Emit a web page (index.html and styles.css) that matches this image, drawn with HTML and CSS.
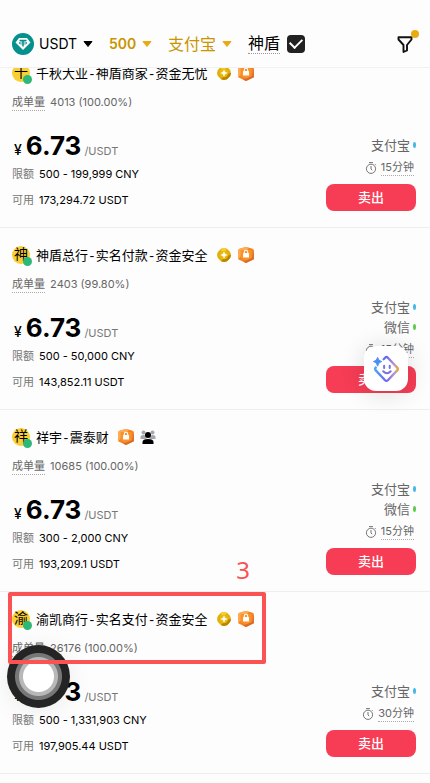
FILE: index.html
```html
<!DOCTYPE html>
<html lang="zh-CN">
<head>
<meta charset="utf-8">
<meta name="viewport" content="width=device-width, initial-scale=1">
<title>USDT 卖出</title>
<link rel="stylesheet" href="styles.css">
</head>
<body>
<svg class="defs" aria-hidden="true">
  <symbol id="coin" viewBox="0 0 14 14">
    <path d="M4 .8 7 0l3 .8L13.200 4 14 7l-.8 3L10 13.200 7 14l-3-.8L.8 10 0 7l.8-3z" fill="#e2b008"/>
    <path d="M4 .8 7 0l3 .8L5 7z" fill="#f6d02c"/>
    <path d="M14 7l-.8 3L10 13.200 7 14l-3-.8L9 8z" fill="#b98500"/>
    <circle cx="7" cy="7" r="4.200" fill="#e9b911"/>
    <path d="M7 3.800l.9 2.300 2.300.9-2.300.9L7 10.200l-.9-2.300L3.800 7l2.300-.9z" fill="#fff" stroke="#fff" stroke-width=".4"/>
  </symbol>
  <symbol id="shield" viewBox="0 0 16 16">
    <path d="M2 1.500 8 0l6 1.500 1.800 1.200v9.600L8 16 .2 12.300V2.700z" fill="#f58220"/>
    <path d="M.2 2.700 2 1.500 8 0l3 .8L3 9l-2.800 3.300z" fill="#ffad55"/>
    <path d="M15.800 2.700v9.600L8 16l-3-1.500 9-3.500z" fill="#d96a2c"/>
    <path d="M2.500 3h11v8L8 13.500 2.500 11z" fill="#fa922b"/>
    <rect x="5" y="6" width="6" height="4.500" rx=".5" fill="#fff"/>
    <path d="M6.300 6.200V5a1.700 1.700 0 0 1 3.400 0v1.200" fill="none" stroke="#fff" stroke-width="1.100"/>
  </symbol>
  <symbol id="timer" viewBox="0 0 12 12">
    <circle cx="6" cy="6.800" r="4.600" fill="none" stroke="#777" stroke-width="1"/>
    <path d="M4 .6h4M6 4v3l1.200 1.200M10 2.200l.9.900" fill="none" stroke="#777" stroke-width="1"/>
  </symbol>
  <symbol id="caret" viewBox="0 0 10 6">
    <path d="M1 .5h8L5 5.500z" fill="currentColor" stroke="currentColor" stroke-linejoin="round"/>
  </symbol>
</svg>

<header class="topbar">
  <label class="pick latin">
    <svg class="tether" viewBox="0 0 22 22" aria-hidden="true">
      <circle cx="11" cy="11" r="11" fill="#05908b"/>
      <path d="M7 5h8l3.500 4.500L11 17 3.500 9.500z" fill="#fff"/>
      <path d="M7.500 7.500h7M11 7.500v6" stroke="#05908b" stroke-width="1.500"/>
      <ellipse cx="11" cy="10" rx="4" ry="1.100" fill="none" stroke="#05908b" stroke-width=".8"/>
    </svg>
    <select aria-label="币种"><option>USDT</option></select>
    <svg class="caret" aria-hidden="true"><use href="#caret"/></svg>
  </label>
  <label class="pick latin gold bold">
    <select aria-label="金额"><option>500</option></select>
    <svg class="caret" aria-hidden="true"><use href="#caret"/></svg>
  </label>
  <label class="pick gold">
    <select aria-label="支付方式"><option>支付宝</option></select>
    <svg class="caret" aria-hidden="true"><use href="#caret"/></svg>
  </label>
  <label class="guard"><span>神盾</span><input type="checkbox" checked></label>
  <button class="filter" type="button" aria-label="筛选">
    <svg viewBox="0 0 16 17" aria-hidden="true"><path d="M1.500 1.200h13v2.300L10 9v5.500L6.500 16V9L1.500 3.500z" fill="none" stroke="#111" stroke-width="1.900" stroke-linejoin="round"/></svg>
  </button>
</header>

<main class="list">
  <article class="offer">
    <h2 class="merchant"><span class="avatar">千</span><a href="#">千秋大业-神盾商家-资金无忧</a><svg class="coin"><use href="#coin"/></svg><svg class="shield"><use href="#shield"/></svg></h2>
    <p class="trades"><span>成单量</span> 4013 (100.00%)</p>
    <div class="body">
      <div class="terms">
        <p class="price"><small>¥</small><b>6.73</b><i>/USDT</i></p>
        <p class="row"><span>限额</span>500 - 199,999 CNY</p>
        <p class="row"><span>可用</span>173,294.72 USDT</p>
      </div>
      <div class="side">
        <p class="pay">支付宝</p>
        <p class="time"><svg><use href="#timer"/></svg><span>15分钟</span></p>
        <button class="sell" type="button">卖出</button>
      </div>
    </div>
  </article>

  <article class="offer">
    <h2 class="merchant"><span class="avatar">神</span><a href="#">神盾总行-实名付款-资金安全</a><svg class="coin"><use href="#coin"/></svg><svg class="shield"><use href="#shield"/></svg></h2>
    <p class="trades"><span>成单量</span> 2403 (99.80%)</p>
    <div class="body">
      <div class="terms">
        <p class="price"><small>¥</small><b>6.73</b><i>/USDT</i></p>
        <p class="row"><span>限额</span>500 - 50,000 CNY</p>
        <p class="row"><span>可用</span>143,852.11 USDT</p>
      </div>
      <div class="side">
        <p class="pay">支付宝</p>
        <p class="pay wechat">微信</p>
        <p class="time"><svg><use href="#timer"/></svg><span>15分钟</span></p>
        <button class="sell" type="button">卖出</button>
      </div>
    </div>
    <button class="assistant" type="button" aria-label="智能助手">
      <svg viewBox="0 0 30 30" aria-hidden="true">
        <defs><linearGradient id="glow" x1="0" y1="0" x2="1" y2="0"><stop offset="0" stop-color="#4aa5f5"/><stop offset=".5" stop-color="#6d65ee"/><stop offset=".85" stop-color="#b79ad0"/><stop offset="1" stop-color="#f0a030"/></linearGradient></defs>
        <path d="M12.500 4.500 14 3q1.500-1.500 3 0l10 10.500q1.500 1.500 0 3L17 27q-1.500 1.500-3 0L4 16.500q-1.200-1.500 0-3" fill="none" stroke="url(#glow)" stroke-width="2.500" stroke-linecap="round"/>
        <path d="M6 2.500q.8 4 4.500 4.500Q6.800 7.500 6 12 5.200 7.500 1.500 7 5.200 6.500 6 2.500z" fill="#4b8df5" stroke="#4b8df5"/>
        <path d="M13 11.500v2.500M19 11.500v2.500" stroke="#7678dd" stroke-width="2.200" stroke-linecap="round"/>
        <path d="M12 17.500q4 4 8 0" fill="none" stroke="#7b70dd" stroke-width="2.200" stroke-linecap="round"/>
      </svg>
    </button>
  </article>

  <article class="offer">
    <h2 class="merchant"><span class="avatar">祥</span><a href="#">祥宇-震泰财</a><svg class="shield"><use href="#shield"/></svg>
      <svg class="group" viewBox="0 0 16 14" aria-hidden="true">
        <g fill="#a3a8b0"><circle cx="3.500" cy="2.500" r="2"/><circle cx="12.500" cy="2.500" r="2"/><path d="M.5 9V7q0-2 3-2t3 2v2zM9.500 9V7q0-2 3-2t3 2v2z"/></g>
        <g fill="#000"><circle cx="8" cy="5" r="3"/><path d="M2.500 14v-2q0-3 5.500-3t5.500 3v2z"/></g>
      </svg></h2>
    <p class="trades"><span>成单量</span> 10685 (100.00%)</p>
    <div class="body">
      <div class="terms">
        <p class="price"><small>¥</small><b>6.73</b><i>/USDT</i></p>
        <p class="row"><span>限额</span>300 - 2,000 CNY</p>
        <p class="row"><span>可用</span>193,209.1 USDT</p>
      </div>
      <div class="side">
        <p class="pay">支付宝</p>
        <p class="pay wechat">微信</p>
        <p class="time"><svg><use href="#timer"/></svg><span>15分钟</span></p>
        <button class="sell" type="button">卖出</button>
      </div>
    </div>
  </article>

  <article class="offer">
    <h2 class="merchant"><span class="avatar">渝</span><a href="#">渝凯商行-实名支付-资金安全</a><svg class="coin"><use href="#coin"/></svg><svg class="shield"><use href="#shield"/></svg></h2>
    <p class="trades"><span>成单量</span> 26176 (100.00%)</p>
    <div class="body">
      <div class="terms">
        <p class="price"><small>¥</small><b>6.73</b><i>/USDT</i></p>
        <p class="row"><span>限额</span>500 - 1,331,903 CNY</p>
        <p class="row"><span>可用</span>197,905.44 USDT</p>
      </div>
      <div class="side">
        <p class="pay">支付宝</p>
        <p class="time"><svg><use href="#timer"/></svg><span>30分钟</span></p>
        <button class="sell" type="button">卖出</button>
      </div>
    </div>
    <div class="touch"></div>
    <div class="marker"><span>3</span></div>
  </article>
</main>
</body>
</html>
```
FILE: styles.css
```css
* { box-sizing: border-box; }

body {
  margin: 0;
  background: #fdfdfd;
  color: #000;
  font-family: Inter, "Noto Sans CJK SC", sans-serif;
  font-size: 11px;
}

h2, p { margin: 0; font-weight: 400; }
button, select, input { margin: 0; padding: 0; border: 0; font: inherit; color: inherit; }
a { color: inherit; text-decoration: none; }
svg { flex: none; }
.defs { display: none; }

.topbar {
  position: sticky;
  top: 0;
  z-index: 5;
  display: flex;
  align-items: center;
  gap: 16px;
  height: 68px;
  padding: 20px 12px 0;
  background: #fdfdfd;
  border-bottom: 1px solid #f1f1f1;
  font-size: 16px;
}

.pick { display: flex; align-items: center; gap: 5px; }
.pick select { appearance: none; background: none; line-height: 24px; }
.latin { font-size: 14px; }
.gold { color: #c99400; }
.gold .caret { color: #eaaa12; }
.bold { font-weight: 600; }
.tether { width: 22px; height: 22px; }
.caret { width: 10px; height: 6px; }

.guard { display: flex; align-items: center; gap: 7px; }
.guard span { line-height: 20px; border-bottom: 1px dotted #999; }
.guard input {
  appearance: none;
  width: 18px;
  height: 18px;
  display: grid;
  place-items: center;
  border-radius: 4px;
  background: #222;
}
.guard input:checked::before {
  content: "";
  width: 10px;
  height: 6px;
  margin-bottom: 3px;
  border: solid #fff;
  border-width: 0 0 2px 2px;
  transform: rotate(-45deg);
}

.filter { position: relative; margin-left: auto; padding: 2px 5px 0 0; background: none; }
.filter svg { display: block; width: 16px; height: 17px; }
.filter::after {
  content: "";
  position: absolute;
  top: -4px;
  right: -1px;
  width: 8px;
  height: 8px;
  border-radius: 50%;
  background: #eaaa12;
}

.list { margin-top: -22px; }

.offer {
  position: relative;
  min-height: 182px;
  padding: 16px 14px 16px 12px;
  border-bottom: 1px solid #eee;
  display: flex;
  flex-direction: column;
}

.merchant {
  display: flex;
  align-items: center;
  height: 22px;
  font-family: "Liberation Mono", "Noto Sans CJK SC", monospace;
  font-size: 13px;
}
.merchant a { margin: 0 9px 2px 6px; }
.avatar {
  position: relative;
  width: 18px;
  height: 18px;
  border-radius: 50%;
  background: #f8cf35;
  font-size: 14px;
  line-height: 18px;
  text-align: center;
  display: flex;
  justify-content: center;
}
.avatar::after {
  content: "";
  position: absolute;
  right: -2px;
  bottom: -2px;
  width: 9px;
  height: 9px;
  border-radius: 50%;
  background: #2bb878;
}
.coin { width: 14px; height: 14px; margin-right: 7px; }
.shield { width: 16px; height: 16px; }
.group { width: 16px; height: 14px; margin-left: 6px; }

.trades { margin-top: 10px; color: #666; line-height: 16px; }
.trades span { display: inline-block; margin-right: 2px; border-bottom: 1px dotted #aaa; }

.body { flex: 1; display: flex; justify-content: space-between; align-items: flex-end; }

.price { display: flex; align-items: baseline; padding-left: 2px; line-height: 20px; }
.price small { margin-right: 4px; font-size: 14px; font-weight: 500; }
.price b { font-size: 26px; font-weight: 700; }
.price i { margin-left: 3px; color: #777; font-style: normal; }
.row { line-height: 26px; }
.row span { margin-right: 5px; color: #777; }
.terms { margin-bottom: -2px; }

.side { display: flex; flex-direction: column; align-items: flex-end; }
.pay {
  display: flex;
  align-items: center;
  gap: 3px;
  line-height: 20px;
  font-size: 13px;
  color: #666;
}
.pay::after { content: ""; width: 3px; height: 6px; border-radius: 50%; background: #45b8e6; }
.wechat::after { background: #5fcb4a; }
.time { display: flex; align-items: center; gap: 4px; margin: 4px 2px 8px 0; line-height: 16px; color: #666; }
.time svg { width: 12px; height: 12px; }
.time span { border-bottom: 1px dotted #aaa; }
.sell {
  width: 90px;
  height: 27px;
  padding-bottom: 2px;
  border-radius: 8px;
  background: #f63d55;
  color: #fff;
  font-size: 13px;
  font-weight: 500;
}

.assistant {
  position: absolute;
  right: 22px;
  top: 118px;
  width: 44px;
  height: 45px;
  display: grid;
  place-items: center;
  border-radius: 12px;
  background: #fff;
  box-shadow: 0 2px 24px rgba(0, 0, 0, .14);
}
.assistant svg { width: 28px; height: 28px; }

.touch {
  position: absolute;
  left: 7px;
  top: 53px;
  width: 63px;
  height: 63px;
  border-radius: 50%;
  background: radial-gradient(circle, #fff 15px, #b8b8b8 16px 19px, #777 20px 23px, #242424 24px);
  box-shadow: 0 2px 24px rgba(0, 0, 0, .08);
}

.marker {
  position: absolute;
  left: 8px;
  top: 0;
  width: 258px;
  height: 72px;
  border: 4px solid #fb5254;
  border-radius: 2px;
}
.marker span {
  position: absolute;
  right: 12px;
  top: -42px;
  color: #fb5254;
  font-family: "Noto Sans", sans-serif;
  font-size: 24px;
  line-height: 32px;
}
```
